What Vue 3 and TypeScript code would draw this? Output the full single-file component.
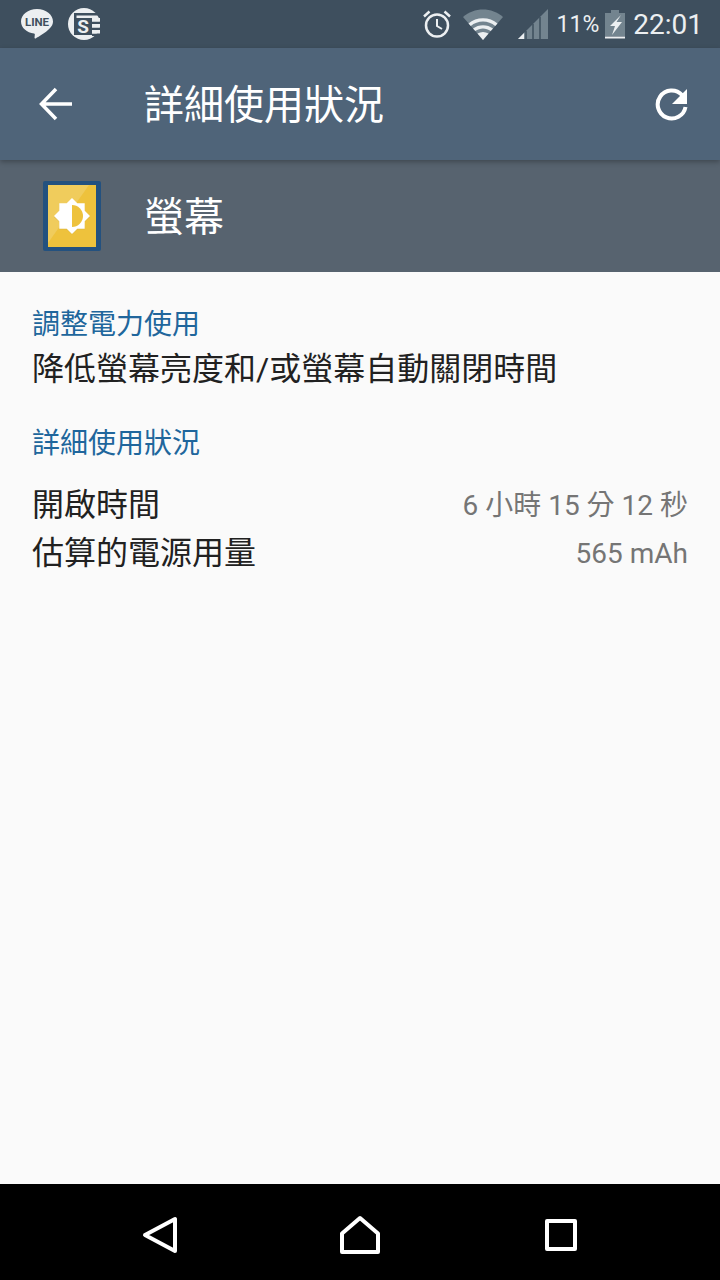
<script setup lang="ts">
const rows = [
  { label: '開啟時間', value: '6 小時 15 分 12 秒' },
  { label: '估算的電源用量', value: '565 mAh' },
]
</script>

<template>
  <div class="page">
    <div class="status">
      <div class="status-left">
        <svg class="ic-line" width="34" height="32" viewBox="0 0 34 32">
          <path d="M17 1C8 1 1 6.600 1 13.500 1 20 7 24.600 14 25.600c.8.2.9.6.8 1.200l-.3 3c0 .8.6 1 1.200.6 3-1.800 10.200-6 13.400-9.400C32 18.400 33 16 33 13.500 33 6.600 26 1 17 1z" fill="#eceff1"/>
          <text x="17" y="18" text-anchor="middle" class="line-txt">LINE</text>
        </svg>
        <svg class="ic-s" width="34" height="34" viewBox="0 0 34 34">
          <circle cx="16" cy="17" r="16" fill="#eceff1"/>
          <path d="M6 6h27v2.500H8.500V12H6z" fill="#3e4f5e"/>
          <rect x="6" y="11" width="18" height="17" fill="#3e4f5e"/>
          <path d="M24 14.500h10V17H24zM24 20.500h10V23H24zM24 26.500h10V29H24z" fill="#3e4f5e"/>
          <path d="M24 11h8v3.500h-8zM24 17h8v3.500h-8zM24 23h8v3.500h-8z" fill="#eceff1"/>
          <text x="15" y="25.500" text-anchor="middle" class="s-txt">S</text>
        </svg>
      </div>
      <div class="status-right">
        <svg width="30" height="30" viewBox="0 0 30 30" fill="none" stroke="#eceff1">
          <circle cx="15" cy="16.500" r="11" stroke-width="2.500"/>
          <path d="M15 10v7l5 3" stroke-width="2"/>
          <path d="M2 7.500 7.500 2.500M28 7.500 22.500 2.500" stroke-width="2.500"/>
        </svg>
        <svg class="wifi" width="40" height="32" viewBox="0 0 40 32">
          <path d="M0 9C11-1 29-1 40 9L20 32z" fill="#73848f"/>
          <path d="M5.500 15.500C13 8.500 27 8.500 34.500 15.500l-2.300 2.500C25.500 12 14.500 12 7.800 18z" fill="#eceff1"/>
          <path d="M10 20.500C15.500 16 24.500 16 30 20.500l-2.300 2.500C23 19.500 17 19.500 12.300 23z" fill="#eceff1"/>
          <path d="M14.500 25.500C18 23.500 22 23.500 25.500 25.500L20 32z" fill="#eceff1"/>
        </svg>
        <svg class="signal" width="30" height="30" viewBox="0 0 30 30">
          <path d="M0 30 30 0v30z" fill="#73848f"/>
          <path d="M0 30 6 24v6z" fill="#eceff1"/>
          <path d="M8 22v8M15 15v15M22 8v22" stroke="#3e4f5e" stroke-width="1.500"/>
        </svg>
        <span class="pct">11%</span>
        <svg class="batt" width="20" height="30" viewBox="0 0 20 30">
          <path d="M6 1h8v3h6v23H0V4h6z" fill="#73848f"/>
          <path d="M0 27.500h20v2H0z" fill="#eceff1"/>
          <path d="M16 6 5 17h5l-3 9 10-13h-5.500z" fill="#eceff1"/>
        </svg>
        <span class="clock">22:01</span>
      </div>
    </div>

    <div class="toolbar">
      <svg class="back" width="34" height="34" viewBox="0 0 34 34" fill="none" stroke="#fff" stroke-width="3.500">
        <path d="M33 17H3M17 2 2.500 17 17 32"/>
      </svg>
      <span class="title">詳細使用狀況</span>
      <svg class="refresh" width="34" height="34" viewBox="0 0 34 34" fill="none">
        <path d="M27 8A14 14 0 1 0 30.500 20" stroke="#fff" stroke-width="4"/>
        <path d="M32 2v15H17z" fill="#fff"/>
      </svg>
    </div>

    <div class="app-head">
      <svg class="app-icon" width="58" height="70" viewBox="0 0 58 70">
        <rect width="58" height="70" rx="2" fill="#23517f"/>
        <rect x="5" y="4" width="48" height="62" fill="#eec23c"/>
        <path d="M5 4h41L5 62z" fill="#f0cc5c"/>
        <path d="M29 18.500l5.280 5.250h7.420v7.420L47 36l-5.300 4.830v7.420h-7.420L29 53.500l-5.280-5.250H16.300v-7.420L11 36l5.300-4.830v-7.420h7.420z" fill="#c9a63a" opacity=".55"/>
        <path d="M29 17l5.280 5.250 7.420.05.05 7.420L47 35l-5.250 5.280-.05 7.420-7.420.05L29 53l-5.280-5.250-7.420-.05-.05-7.420L11 35l5.250-5.280.05-7.420 7.420-.05z" fill="#fff"/>
        <path d="M29 24A11 11 0 0 1 29 46z" fill="#eec23c"/>
      </svg>
      <span class="app-name">螢幕</span>
    </div>

    <div class="content">
      <div class="section first">調整電力使用</div>
      <div class="tip">降低螢幕亮度和/或螢幕自動關閉時間</div>
      <div class="section second">詳細使用狀況</div>
      <div class="rows">
        <div v-for="r in rows" :key="r.label" class="row">
          <span class="label">{{ r.label }}</span>
          <span class="value">{{ r.value }}</span>
        </div>
      </div>
    </div>

    <div class="nav">
      <svg width="36" height="38" viewBox="0 0 36 38" fill="none" stroke="#fff" stroke-width="4" stroke-linejoin="round">
        <path d="M33 3v32L3 19z"/>
      </svg>
      <svg class="home" width="40" height="40" viewBox="0 0 40 40" fill="none" stroke="#fff" stroke-width="4" stroke-linejoin="round">
        <path d="M20 3 38 18.500V37H2V18.500z"/>
      </svg>
      <svg width="32" height="32" viewBox="0 0 32 32" fill="none" stroke="#fff" stroke-width="4" stroke-linejoin="round">
        <rect x="2" y="2" width="28" height="28"/>
      </svg>
    </div>
  </div>
</template>

<style>
html, body { margin: 0; background: #fafafa; }
</style>

<style scoped>
.page {
  width: 720px;
  height: 1280px;
  display: flex;
  flex-direction: column;
  background: #fafafa;
  font-family: Roboto, "Noto Sans CJK TC", sans-serif;
  overflow: hidden;
}
.status {
  height: 48px;
  background: #3e4f5e;
  display: flex;
  align-items: center;
  justify-content: space-between;
  padding: 0 17px 0 20px;
}
.status-left { display: flex; align-items: center; gap: 14px; }
.line-txt { font: 700 11.500px Roboto, sans-serif; fill: #3e4f5e; }
.s-txt { font: 700 19px Roboto, sans-serif; fill: #eceff1; }
.status-right { display: flex; align-items: center; }
.wifi { margin-left: 11px; }
.signal { margin-left: 15px; }
.pct { margin-left: 9px; font-size: 23px; color: #eceff1; }
.batt { margin-left: 6px; }
.clock { margin-left: 8px; font-size: 28px; color: #eceff1; }
.toolbar {
  height: 112px;
  background: #4f6479;
  display: flex;
  align-items: center;
  box-shadow: 0 2px 5px rgba(0, 0, 0, .28);
  position: relative;
}
.back { margin-left: 39px; }
.title { margin: 0 0 4px 71px; font-size: 40px; color: #fff; flex: 1; }
.refresh { margin-right: 31px; }
.app-head {
  height: 112px;
  background: #57636f;
  display: flex;
  align-items: center;
}
.app-icon { margin-left: 43px; }
.app-name { margin: 0 0 4px 43px; font-size: 40px; color: #fff; }
.content { flex: 1; padding: 32px 32px 0 32px; }
.section { font-size: 28px; line-height: 41px; color: #20669c; }
.tip { margin-top: 1px; font-size: 32px; line-height: 46px; color: #212121; }
.second { margin-top: 31px; }
.rows { margin-top: 13px; }
.row {
  display: flex;
  justify-content: space-between;
  align-items: center;
  height: 48px;
}
.label { padding-top: 8px; font-size: 32px; line-height: 46px; color: #212121; }
.value { padding-top: 9px; font-size: 28px; line-height: 36px; color: #757575; }
.nav {
  height: 96px;
  padding: 6px 143px 0 142px;
  box-sizing: border-box;
  background: #000;
  display: flex;
  align-items: center;
  justify-content: space-between;
}
.home { margin-right: 3px; }
</style>
